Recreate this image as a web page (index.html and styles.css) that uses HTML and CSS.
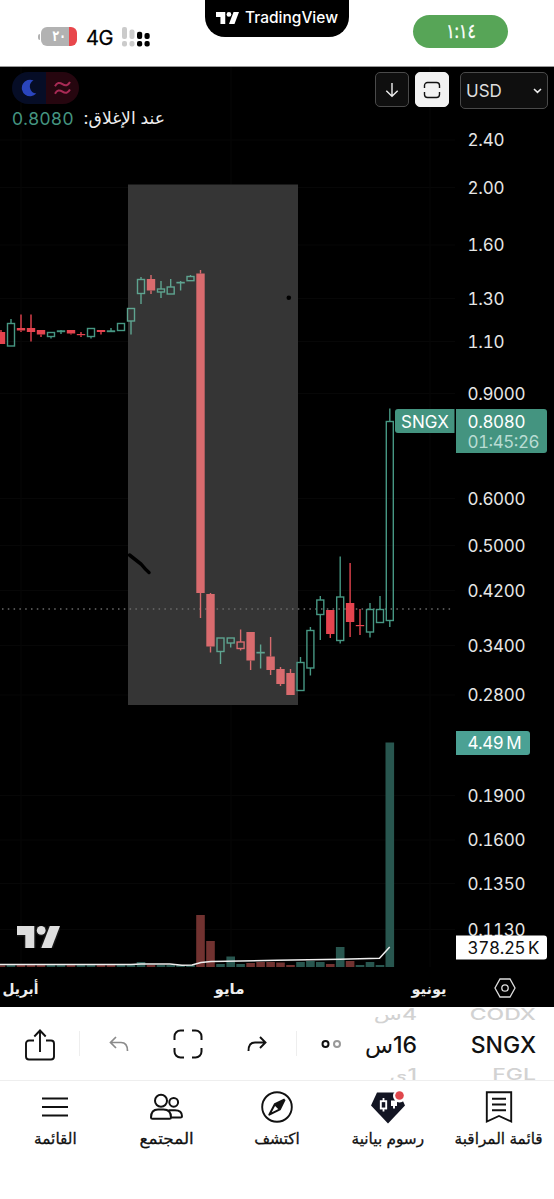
FILE: index.html
```html
<!DOCTYPE html>
<html lang="ar" dir="ltr">
<head>
    <meta charset="UTF-8">
    <meta name="viewport" content="width=device-width, initial-scale=1.0">
    <title>SNGX - TradingView</title>
    <link rel="stylesheet" href="styles.css">
</head>
<body>
    <svg class="defs" width="0" height="0">
        <symbol id="logo" viewBox="0 0 43 22">
            <path d="M0 0H17.3V22H8.3V9H0Z"/>
            <circle cx="24.2" cy="4.4" r="4.4"/>
            <path d="M32.8 0H43L34.6 22H24.3Z"/>
        </symbol>
    </svg>

    <header class="status">
        <div class="status-left">
            <div class="battery"><span>٢٠</span></div>
            <span class="network">4G</span>
            <svg class="signal" width="29" height="21" viewBox="0 0 29 21">
                <g fill="#cbcbcb">
                    <rect x="0" y="0" width="5" height="12" rx="2"/>
                    <rect x="7.5" y="2.5" width="5" height="9.5" rx="2"/>
                    <rect x="0" y="14" width="5" height="5.5" rx="2"/>
                    <rect x="7.5" y="14" width="5" height="5.5" rx="2"/>
                </g>
                <g fill="#000">
                    <rect x="15" y="4.8" width="5.2" height="7.2" rx="2"/>
                    <rect x="22.5" y="6" width="5.2" height="6" rx="2"/>
                    <rect x="15" y="14" width="5.2" height="5.5" rx="2"/>
                    <rect x="22.5" y="14" width="5.2" height="5.5" rx="2"/>
                </g>
            </svg>
        </div>
        <div class="island">
            <svg width="23" height="12" fill="#fff"><use href="#logo"/></svg>
            <span>TradingView</span>
        </div>
        <div class="clock"><span>١:١٤</span></div>
    </header>

    <main class="chart">
        <svg id="plot" class="plot" width="554" height="940" viewBox="0 67 554 940"></svg>
        <div class="legend">
            <div class="badges">
                <span class="badge-night">
                    <svg width="18" height="18" viewBox="0 0 18 18"><path d="M13.500 1.400A8.300 8.300 0 1 0 16.300 14.500A7 7 0 0 1 13.500 1.400Z" fill="#2a45bd"/></svg>
                </span>
                <span class="badge-approx">
                    <svg width="17" height="14" viewBox="0 0 17 14" fill="none" stroke="#a82a55" stroke-width="2"><path d="M1 5.200C3 1.500 5.500 1.200 8.500 3.200S14 4.600 16 1M1 12.700C3 9 5.500 8.700 8.500 10.700S14 12.100 16 8.500"/></svg>
                </span>
            </div>
            <div class="close">
                <span class="close-value">0.8080</span>
                <span class="close-label" dir="rtl">عند الإغلاق:</span>
            </div>
        </div>
        <div class="controls">
            <button class="tool">
                <svg width="16" height="16" viewBox="0 0 16 16" fill="none" stroke="#eee" stroke-width="1.4"><path d="M8 1V14M2.300 8.700L8 14.300L13.700 8.700"/></svg>
            </button>
            <button class="tool tool-on">
                <svg width="18" height="18" viewBox="0 0 18 18" fill="none" stroke="#111" stroke-width="1.4"><path d="M1.500 7V4.500A3 3 0 0 1 4.500 1.500H13.500A3 3 0 0 1 16.500 4.500V7M1.500 11V13.500A3 3 0 0 0 4.500 16.500H13.500A3 3 0 0 0 16.500 13.500V11"/></svg>
            </button>
            <button class="currency">
                <span>USD</span>
                <svg width="9" height="6" viewBox="0 0 9 6" fill="none" stroke="#eee" stroke-width="1.500"><path d="M1 1L4.500 4.400L8 1"/></svg>
            </button>
        </div>
    </main>

    <nav class="toolbar">
        <svg class="share" width="30" height="32" viewBox="0 0 30 32" fill="none" stroke="#111" stroke-width="1.900"><path d="M9 11.500H4A3 3 0 0 0 1 14.500V27.500A3 3 0 0 0 4 30.500H26A3 3 0 0 0 29 27.500V14.500A3 3 0 0 0 26 11.500H21M15 23V2M9.300 7.500L15 1.500L20.700 7.500"/></svg>
        <i class="sep"></i>
        <svg class="undo" width="20" height="16" viewBox="0 0 20 16" fill="none" stroke="#8b8b8b" stroke-width="1.700"><path d="M7 1L1.500 6.500L7 12M1.500 6.500H12C16.500 6.500 18.500 9.500 18.500 15"/></svg>
        <svg class="full" width="30" height="30" viewBox="0 0 30 30" fill="none" stroke="#111" stroke-width="2"><path d="M1.500 11V7.500A6 6 0 0 1 7.500 1.500H11M19 1.500H22.500A6 6 0 0 1 28.500 7.500V11M28.500 19V22.500A6 6 0 0 1 22.500 28.500H19M11 28.500H7.500A6 6 0 0 1 1.500 22.500V19"/></svg>
        <svg class="redo" width="20" height="16" viewBox="0 0 20 16" fill="none" stroke="#111" stroke-width="1.900"><path d="M13 1L18.500 6.500L13 12M18.500 6.500H8C3.500 6.500 1.500 9.500 1.500 15"/></svg>
        <i class="sep sep-right"></i>
        <svg class="dots" width="20" height="10" viewBox="0 0 20 10" fill="none" stroke-width="2"><circle cx="4.500" cy="5" r="3" stroke="#111"/><circle cx="16" cy="5" r="3" stroke="#999"/></svg>
        <div class="wheel wheel-interval" dir="rtl">
            <span class="faded">4س</span>
            <span>16س</span>
            <span class="faded">1ي</span>
        </div>
        <div class="wheel wheel-symbol">
            <span class="faded">CODX</span>
            <span>SNGX</span>
            <span class="faded">FGL</span>
        </div>
    </nav>

    <footer class="tabs">
        <a class="tab">
            <svg width="34" height="34" viewBox="0 0 34 34" stroke="#111" stroke-width="2"><path d="M4 8.500H30M4 17H30M4 25.500H30"/></svg>
            <span>القائمة</span>
        </a>
        <a class="tab">
            <svg width="34" height="34" viewBox="0 0 34 34" fill="none" stroke="#111" stroke-width="2"><circle cx="12" cy="10.800" r="6"/><circle cx="24.700" cy="12.300" r="4.400"/><path d="M2 27.500C2 22 5 19.500 9 19.500H14.500C19 19.500 22 22 22 27.500Q22 28.800 20.500 28.800H3.500Q2 28.800 2 27.500ZM19.500 20.200H26C30.500 20.200 33 22.500 33 26.300Q33 27.500 31.500 27.500H22"/></svg>
            <span class="wide">المجتمع</span>
        </a>
        <a class="tab">
            <svg width="34" height="34" viewBox="0 0 34 34"><circle cx="17" cy="17" r="14.800" fill="none" stroke="#111" stroke-width="1.900"/><path d="M24.700 9.500L19.900 19.400L14.800 14.200Z" fill="#111"/><path d="M24.700 9.500L14.800 14.200L9.300 24.700L19.900 19.400L24.700 9.500M14.800 14.200L19.900 19.400" fill="none" stroke="#111" stroke-width="2" stroke-linejoin="round"/></svg>
            <span>اكتشف</span>
        </a>
        <a class="tab">
            <svg width="34" height="34" viewBox="0 0 34 34"><path d="M6 2.500H28L34 15.500L17 33.500L0 15.500Z" fill="#131523"/><path d="M12.500 8V21.500" stroke="#fff" stroke-width="1.800"/><rect x="9.800" y="11.200" width="5.400" height="7.300" fill="#131523" stroke="#fff" stroke-width="1.900"/><path d="M20 10.500H26V16H24V18.500H22V16H20Z" fill="#fff"/><circle cx="28.500" cy="6" r="6.500" fill="#fff"/><circle cx="28.500" cy="5.500" r="4.300" fill="#e0474c"/></svg>
            <span>رسوم بيانية</span>
        </a>
        <a class="tab">
            <svg width="34" height="34" viewBox="0 0 34 34" fill="none" stroke="#111" stroke-width="1.900"><path d="M4.800 2.200H29.200V31.500L17 26L4.800 31.500ZM10 8.800H24M10 14.500H24M10 20.200H24"/></svg>
            <span>قائمة المراقبة</span>
        </a>
    </footer>

    <script src="chart.js"></script>
</body>
</html>
```

FILE: styles.css
```css
* {
    box-sizing: border-box;
}
body {
    margin: 0;
    width: 554px;
    height: 1199px;
    overflow: hidden;
    background: #fff;
    color: #111;
    font-family: Inter, "DejaVu Sans", sans-serif;
}
.defs {
    display: block;
}
button {
    font-family: inherit;
    padding: 0;
}

/* status bar */
.status {
    display: grid;
    grid-template-columns: 205px 144px 205px;
    height: 67px;
    border-bottom: 1px solid #999;
}
.status-left {
    display: flex;
    align-items: flex-start;
    padding: 27px 0 0 41px;
}
.battery {
    position: relative;
    width: 36px;
    height: 19px;
    border-radius: 6px;
    background: linear-gradient(to right, #b2b2b2 28px, #e8474c 28px);
    color: #fff;
    font: bold 15px/19px "DejaVu Sans", sans-serif;
    text-align: center;
}
.battery span {
    display: inline-block;
    transform: scaleX(0.72);
}
.battery::before {
    content: "";
    position: absolute;
    left: -3px;
    top: 7px;
    width: 2px;
    height: 6px;
    border-radius: 2px 0 0 2px;
    background: #b2b2b2;
}
.network {
    margin-left: 9px;
    width: 27px;
    font-size: 20px;
    line-height: 22px;
    letter-spacing: -0.5px;
    -webkit-text-stroke: 0.3px #000;
    color: #000;
}
.signal {
    margin-left: 9px;
}
.island {
    display: flex;
    justify-content: center;
    align-items: center;
    gap: 6px;
    height: 37px;
    padding-bottom: 2px;
    border-radius: 0 0 20px 20px;
    background: #000;
    color: #fff;
    font-size: 15.5px;
    font-weight: 500;
}
.clock {
    margin: 15px 0 0 64px;
    width: 95px;
    height: 33px;
    border-radius: 17px;
    background: #57a557;
    color: #fff;
    font-size: 20px;
    line-height: 32px;
    text-align: center;
}
.clock span {
    display: inline-block;
    transform: scaleX(0.78);
    -webkit-text-stroke: 0.3px #fff;
}

/* chart */
.chart {
    position: relative;
    height: 940px;
    background: #000;
}
.plot {
    display: block;
    font-size: 17px;
    font-variant-numeric: tabular-nums;
}
.legend {
    position: absolute;
    left: 12px;
    top: 5px;
}
.badges {
    display: flex;
    width: 67px;
    height: 32px;
    border-radius: 16px;
    overflow: hidden;
}
.badges span {
    flex: 1;
    display: flex;
    align-items: center;
    justify-content: center;
}
.badge-night {
    background: #060d26;
}
.badge-approx {
    background: #26060f;
}
.close {
    display: flex;
    align-items: center;
    gap: 8px;
    height: 28px;
    font-size: 17.5px;
}
.close-value {
    width: 62px;
    color: #459581;
    letter-spacing: 0.5px;
}
.close-label {
    width: 83px;
    color: #eee;
    font-size: 17.2px;
    line-height: 20px;
    white-space: nowrap;
}
.controls {
    position: absolute;
    top: 5px;
    right: 6px;
    display: flex;
}
.tool {
    display: flex;
    align-items: center;
    justify-content: center;
    width: 34px;
    height: 35px;
    margin-right: 6px;
    border: 1px solid #4a4a4a;
    border-radius: 5px;
    background: #0f0f0f;
}
.tool-on {
    margin-right: 11px;
    border-color: #f2f2f2;
    background: #f2f2f2;
}
.currency {
    display: flex;
    align-items: center;
    justify-content: space-between;
    width: 88px;
    height: 37px;
    padding: 0 5px;
    border: 1px solid #4a4a4a;
    border-radius: 5px;
    background: #0f0f0f;
    color: #ddd;
    font-size: 17px;
}

/* chart parts */
.grid {
    stroke: #070707;
}
.range {
    fill: #353535;
}
.price-line {
    stroke: #6b6b6b;
    stroke-width: 1.3;
    stroke-dasharray: 1.5 4.3;
}
.wick {
    stroke-width: 1.4;
}
.hollow {
    fill: none;
    stroke-width: 1.4;
}
.up {
    stroke: #469783;
}
.down {
    stroke: #e5444f;
}
.solid.down {
    fill: #e5444f;
    stroke: none;
}
.in-range .up {
    stroke: #5ea490;
}
.in-range .down {
    stroke: #d96b6e;
}
.in-range .solid.down {
    fill: #d96b6e;
    stroke: none;
}
.vol-up {
    fill: #28564f;
}
.vol-down {
    fill: #713230;
}
.average {
    fill: none;
    stroke: #eee;
    stroke-width: 1.5;
}
.ink {
    fill: none;
    stroke: #000;
    stroke-width: 3.5;
    stroke-linecap: round;
}
.axis {
    fill: #e6e6e6;
}
.month {
    fill: #eee;
    font-size: 15px;
    font-weight: bold;
    text-anchor: middle;
}
.tag {
    fill: #449480;
}
.tag-volume {
    fill: #4ba194;
}
.tag-average {
    fill: #fff;
}
.tag-text {
    fill: #fff;
}
.countdown {
    fill: #b9dcd3;
}
.tag-dark {
    fill: #111;
}
.settings {
    fill: none;
    stroke: #ddd;
    stroke-width: 1.3;
}
.watermark {
    fill: #dedede;
    stroke: #151515;
    stroke-width: 3px;
    paint-order: stroke;
    overflow: visible;
}

/* toolbar */
.toolbar {
    display: flex;
    align-items: flex-start;
    height: 74px;
    border-bottom: 1px solid #eee;
    overflow: hidden;
}
.share {
    margin: 22px 0 0 25px;
}
.sep {
    width: 1px;
    height: 25px;
    margin: 24px 0 0 24px;
    background: #eee;
}
.undo {
    margin: 29px 0 0 29px;
}
.full {
    margin: 22px 0 0 44px;
}
.redo {
    margin: 29px 0 0 44px;
}
.sep-right {
    margin-left: 29px;
}
.dots {
    margin: 32px 0 0 24px;
}
.wheel {
    display: flex;
    flex-direction: column;
    height: 74px;
    margin-top: -8px;
    font-size: 23px;
    font-weight: 500;
    line-height: 30px;
    white-space: nowrap;
}
.wheel span {
    display: block;
    padding-top: 1px;
    height: 30px;
}
.wheel .faded {
    color: #d2d2d2;
    transform: scaleY(0.7);
}
.wheel-interval {
    width: 58px;
    margin-left: 18px;
}
.wheel-symbol {
    width: 80px;
    margin-left: 39px;
    text-align: right;
}

/* bottom tabs */
.tabs {
    display: grid;
    grid-template-columns: repeat(5, 1fr);
    height: 118px;
    padding-top: 9px;
}
.tab {
    display: flex;
    flex-direction: column;
    align-items: center;
    font-size: 15.3px;
    line-height: 24px;
    white-space: nowrap;
}
.tab span {
    margin-top: 3px;
    -webkit-text-stroke: 0.3px #111;
}
.tab .wide {
    transform: scaleX(1.1);
}
```

FILE: chart.js
```js
const NS = 'http://www.w3.org/2000/svg';
const plot = document.getElementById('plot');

function add(tag, attrs, parent = plot, text) {
    const el = document.createElementNS(NS, tag);
    for (const key in attrs) el.setAttribute(key, attrs[key]);
    if (text) el.textContent = text;
    parent.appendChild(el);
    return el;
}

const labels = [
    [140, '2.40'], [187.5, '2.00'], [245, '1.60'], [298.5, '1.30'], [341.5, '1.10'],
    [393.5, '0.9000'], [498.5, '0.6000'], [545.5, '0.5000'], [590.5, '0.4200'],
    [645.5, '0.3400'], [695, '0.2800'], [795.5, '0.1900'], [840, '0.1600'],
    [883.5, '0.1350'], [929.5, '0.1130']
];

// x, high, body top, body bottom, low, type (g = up, r = down, h = hollow down)
const candles = [
    [1, 330, 332, 344, 344, 'r'], [11, 319, 323.5, 346, 346, 'g'],
    [21, 314.5, 328, 330.5, 332, 'r'], [31, 314.5, 328, 332, 341.5, 'r'],
    [41, 330, 330, 334.5, 337, 'r'], [51, 332.5, 332.5, 336.5, 338.5, 'g'],
    [61, 330, 331, 331.5, 334, 'g'], [71, 330, 330, 333.5, 334.5, 'r'],
    [81, 332, 334, 335.2, 337, 'r'], [91, 328.5, 328.5, 336.5, 338.5, 'g'],
    [101, 330, 330, 332, 334.5, 'r'], [111, 328, 331, 331.5, 332, 'g'],
    [121, 323.5, 323.5, 330.5, 330.5, 'g'], [131, 308.5, 308.5, 321, 334.5, 'g'],
    [141, 277, 279.5, 293.5, 304, 'g'], [151, 275, 279, 290.5, 294, 'r'],
    [161, 281, 289, 292, 298, 'g'], [170.7, 279, 287, 294, 294, 'g'],
    [180.6, 281, 282.5, 282.8, 290.5, 'g'], [190.5, 275, 276.5, 280.7, 280.7, 'g'],
    [200.5, 270, 273.5, 593, 618, 'r'], [210.5, 593, 594, 646.5, 652.5, 'r'],
    [220.5, 638, 638, 651.5, 664, 'g'], [230.7, 638, 638, 643, 647.5, 'g'],
    [240.6, 629.5, 642, 648.5, 650.5, 'h'], [250.6, 632, 632, 660.5, 670, 'r'],
    [260.6, 644.5, 652.5, 652.8, 668.5, 'g'], [270.6, 637, 656.5, 670, 675, 'r'],
    [280.5, 667, 669, 684, 686, 'r'], [290.5, 669, 673, 695, 695, 'r'],
    [300.5, 657, 662.5, 690.5, 690.5, 'g'], [310.4, 627, 630.5, 668, 675.5, 'g'],
    [320.3, 596, 600, 614.5, 640, 'g'], [330.3, 610, 610, 634, 638, 'r'],
    [340.2, 556.5, 597, 640.5, 643.5, 'g'], [350.1, 563, 603, 622, 637, 'r'],
    [360, 609, 625, 626.2, 635, 'r'], [370, 603, 609.5, 632, 637.5, 'g'],
    [380, 596, 609.5, 622.5, 622.5, 'g'], [389.8, 408.5, 421.5, 620.5, 627, 'g']
];

// bar tops and colours, in the same order as the candles
const volumeTops = [
    965.3, 965, 965, 965, 965, 965, 965, 965, 965, 965, 965, 965, 965, 965, 962, 965,
    965, 965, 965, 965, 915, 941, 964, 956.5, 964, 963, 962, 962, 962.5, 965,
    962, 961, 962, 964, 947, 961, 965, 962, 965, 742.5
];
const volumeColors = 'rgrrrggrggrrgggrggggrrgggrrrrrgggrgrgggg';
const base = 967;

// grid
labels.forEach(([y]) => add('path', { class: 'grid', d: `M0 ${y}H455` }));
[21, 231, 430].forEach(x => add('path', { class: 'grid', d: `M${x} 67V967` }));

add('rect', { class: 'range', x: 128, y: 184.5, width: 170, height: 520.5 });
add('path', { class: 'price-line', d: 'M2 609H452' });

candles.forEach(([x, high, top, bottom, low, type]) => {
    const dir = type === 'g' ? 'up' : 'down';
    const g = add('g', { class: x > 128 && x < 298 ? 'in-range' : '' });
    if (high < top) add('path', { class: `wick ${dir}`, d: `M${x} ${high}V${top}` }, g);
    if (low > bottom) add('path', { class: `wick ${dir}`, d: `M${x} ${bottom}V${low}` }, g);
    if (type === 'r') {
        add('rect', { class: 'solid down', x: x - 4.2, y: top, width: 8.4, height: bottom - top }, g);
    } else {
        add('rect', { class: `hollow ${dir}`, x: x - 3.5, y: top, width: 7, height: bottom - top }, g);
    }
});

volumeTops.forEach((top, i) => {
    const cls = volumeColors[i] === 'g' ? 'vol-up' : 'vol-down';
    add('rect', { class: cls, x: candles[i][0] - 4.3, y: top, width: 8.6, height: base - top });
});
add('path', { class: 'average', d: 'M0 964.6H131L141 964H170L182 965.3L192 965L201 962.5L211 961.5L277 960.3L340 959.2L379.5 958.3L389.7 947' });

// drawings
add('path', { class: 'ink', d: 'M129.500 555L141 564Q145 569 149 572.500' });
add('circle', { cx: 288.8, cy: 297.8, r: 2.3, fill: '#000' });

labels.forEach(([y, text]) => add('text', { class: 'axis', x: 467.5, y: y + 6.2, textLength: text.length > 4 ? 58 : 37 }, plot, text));

// price and volume tags
add('path', { class: 'tag', d: 'M398 409H454.500V433H398Q395 433 395 430V412Q395 409 398 409Z' });
add('text', { class: 'tag-text', x: 401, y: 427.7 }, plot, 'SNGX');
add('path', { class: 'tag', d: 'M456 409H544Q547 409 547 412V450Q547 453 544 453H456Z' });
add('text', { class: 'tag-text', x: 467.5, y: 428, textLength: 58 }, plot, '0.8080');
add('text', { class: 'countdown', x: 467.5, y: 448, textLength: 72 }, plot, '01:45:26');
add('path', { class: 'tag-volume', d: 'M456 731H527Q530 731 530 734V752Q530 755 527 755H456Z' });
add('text', { class: 'tag-text', x: 467.5, y: 749.3, textLength: 54 }, plot, '4.49\u2009M');
add('path', { class: 'tag-average', d: 'M456 935.500H544Q547 935.500 547 938.500V956.500Q547 959.500 544 959.500H456Z' });
add('text', { class: 'tag-dark', x: 467.5, y: 954, textLength: 72 }, plot, '378.25\u2009K');

// time axis
add('text', { class: 'month', x: 20.5, y: 993.5, textLength: 36, lengthAdjust: 'spacingAndGlyphs' }, plot, 'أبريل');
add('text', { class: 'month', x: 229.5, y: 993.5 }, plot, 'مايو');
add('text', { class: 'month', x: 429, y: 993.5, textLength: 35, lengthAdjust: 'spacingAndGlyphs' }, plot, 'يونيو');
add('path', { class: 'settings', d: 'M500 979H510L515 988L510 997H500L495 988Z' });
add('circle', { class: 'settings', cx: 505, cy: 988, r: 3.2 });

add('use', { class: 'watermark', href: '#logo', x: 17, y: 926, width: 43, height: 22 });
```
